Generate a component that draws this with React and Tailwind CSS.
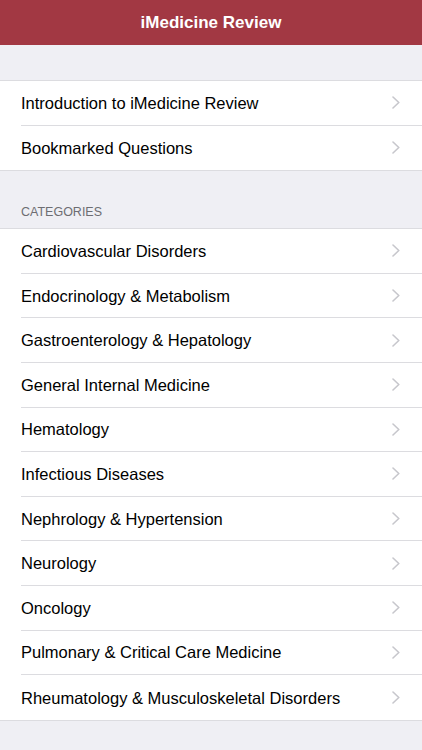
const topRows = ['Introduction to iMedicine Review', 'Bookmarked Questions'];

const categories = [
  'Cardiovascular Disorders',
  'Endocrinology & Metabolism',
  'Gastroenterology & Hepatology',
  'General Internal Medicine',
  'Hematology',
  'Infectious Diseases',
  'Nephrology & Hypertension',
  'Neurology',
  'Oncology',
  'Pulmonary & Critical Care Medicine',
  'Rheumatology & Musculoskeletal Disorders',
];

const Chevron = () => (
  <svg width="8" height="13" viewBox="0 0 8 13" fill="none">
    <polyline points="1,1 6.8,6.5 1,12" stroke="#c7c7cc" strokeWidth="1.6" strokeLinecap="round" strokeLinejoin="round" />
  </svg>
);

const Row = ({ label, last }) => (
  <div className="flex h-[44.6px] items-stretch pl-[21px]">
    <div className={`flex flex-1 items-center justify-between pr-[22px] ${last ? '' : 'border-b border-[#dcdce0]'}`}>
      <span className="pt-[1px] text-[16.5px] text-black">{label}</span>
      <Chevron />
    </div>
  </div>
);

const Group = ({ items }) => (
  <div className="border-y border-[#dcdce0] bg-white">
    {items.map((item, i) => (
      <Row key={item} label={item} last={i === items.length - 1} />
    ))}
  </div>
);

export default function App() {
  return (
    <div className="h-[750px] overflow-hidden bg-[#efeff4]" style={{ fontFamily: '"Liberation Sans", Arial, sans-serif' }}>
      {/* nav bar */}
      <div className="flex h-[45px] items-center justify-center bg-[#a23843]">
        <h1 className="text-[17px] font-bold text-white">iMedicine Review</h1>
      </div>

      <div className="h-[35px]" />
      <Group items={topRows} />

      <div className="flex h-[57px] items-end px-[21px] pb-[6px]">
        <span className="text-[12.5px] text-[#6d6d72]">CATEGORIES</span>
      </div>
      <Group items={categories} />
    </div>
  );
}
